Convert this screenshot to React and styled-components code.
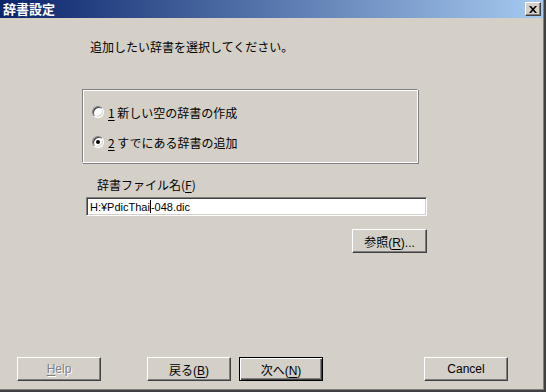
import React from "react";
import styled, { createGlobalStyle, css } from "styled-components";

const GlobalStyle = createGlobalStyle`
  html, body {
    margin: 0;
    padding: 0;
    background: #d4d0c8;
  }
  body {
    font-family: "Liberation Sans", "Noto Sans CJK JP", sans-serif;
    font-size: 12px;
    color: #000;
  }
`;

const Window = styled.div`
  width: 546px;
  height: 392px;
  box-sizing: border-box;
  display: flex;
  flex-direction: column;
  background: #d4d0c8;
  border-right: 2px solid #404040;
  border-bottom: 2px solid #404040;
  box-shadow: inset -1px -1px 0 #808080;
  overflow: hidden;
`;

const TitleBar = styled.div`
  height: 18px;
  flex-shrink: 0;
  margin-right: 1px;
  display: flex;
  align-items: center;
  justify-content: space-between;
  padding: 0 2px 0 3px;
  background: linear-gradient(to right, #0a246a, #a6caf0);
`;

const Title = styled.span`
  color: #fff;
  font-family: "Noto Sans CJK JP", sans-serif;
  font-weight: 700;
  font-size: 13px;
  line-height: 18px;
`;

const raised = css`
  background: #d4d0c8;
  box-sizing: border-box;
  border: 1px solid;
  border-color: #fff #404040 #404040 #fff;
  box-shadow: inset -1px -1px 0 #808080;
`;

const CloseBox = styled.div`
  ${raised};
  width: 16px;
  height: 14px;
  display: flex;
  align-items: center;
  justify-content: center;
`;

const Body = styled.div`
  flex: 1;
  display: flex;
  flex-direction: column;
`;

const Intro = styled.div`
  margin: 22px 0 0 90px;
  font-family: "Noto Sans CJK JP", sans-serif;
  font-size: 12px;
  line-height: 14px;
`;

const GroupBox = styled.div`
  margin: 35px 0 0 82px;
  width: 336px;
  height: 74px;
  box-sizing: border-box;
  border: 1px solid;
  border-color: #808080 #fff #fff #808080;
  box-shadow: inset 1px 1px 0 #fff;
  display: flex;
  flex-direction: column;
  gap: 14px;
  padding: 14px 0 0 9px;
  position: relative;
  &::after {
    content: "";
    position: absolute;
    inset: 0 -2px -2px 0;
    border-right: 1px solid #808080;
    border-bottom: 1px solid #808080;
    pointer-events: none;
  }
`;

const RadioRow = styled.label`
  display: flex;
  align-items: center;
  height: 16px;
  gap: 4px;
  font-family: "Noto Sans CJK JP", sans-serif;
  font-size: 12px;
`;

const RadioCircle = styled.span`
  width: 12px;
  height: 12px;
  box-sizing: border-box;
  border-radius: 50%;
  border: 1px solid;
  border-color: #808080 #fff #fff #808080;
  box-shadow: inset 1px 1px 0 #404040, inset -1px -1px 0 #d4d0c8;
  background: #fff;
  display: flex;
  align-items: center;
  justify-content: center;
  &::after {
    content: "";
    width: 4px;
    height: 4px;
    border-radius: 50%;
    background: ${(p) => (p.$checked ? "#000" : "transparent")};
  }
`;

const Key = styled.span`
  text-decoration: underline;
  text-underline-offset: 2px;
`;

const FieldLabel = styled.div`
  margin: 15px 0 0 97px;
  font-family: "Noto Sans CJK JP", sans-serif;
  font-size: 12px;
  line-height: 14px;
`;

const FileInput = styled.div`
  margin: 5px 0 0 86px;
  width: 341px;
  height: 19px;
  box-sizing: border-box;
  background: #fff;
  border: 1px solid;
  border-color: #808080 #fff #fff #808080;
  box-shadow: inset 1px 1px 0 #404040, inset -1px -1px 0 #d4d0c8;
  padding: 0 0 0 3px;
  display: flex;
  align-items: center;
  font-family: "Liberation Sans", sans-serif;
  font-size: 11px;
`;

const Caret = styled.span`
  display: inline-block;
  width: 1px;
  height: 13px;
  background: #000;
`;

const Button = styled.button`
  ${raised};
  width: ${(p) => p.$w || 84}px;
  height: 24px;
  padding: 0;
  font-family: "Liberation Sans", "Noto Sans CJK JP", sans-serif;
  font-size: 12px;
  color: #000;
  cursor: default;
  ${(p) =>
    p.$default &&
    css`
      border: 1px solid #000;
      box-shadow: inset 1px 1px 0 #fff, inset -1px -1px 0 #404040, inset -2px -2px 0 #808080;
    `}
  ${(p) =>
    p.disabled &&
    css`
      color: #808080;
      text-shadow: 1px 1px 0 #fff;
    `}
`;

const BrowseRow = styled.div`
  display: flex;
  justify-content: flex-end;
  margin: 13px 117px 0 0;
`;

const ButtonRow = styled.div`
  margin-top: auto;
  margin-bottom: 9px;
  padding: 0 36px 0 17px;
  display: flex;
  align-items: center;
`;

const Spacer = styled.div`
  width: ${(p) => p.$w}px;
  flex-shrink: 0;
`;

const Filler = styled.div`
  flex: 1;
`;

export default function App() {
  return (
    <>
      <GlobalStyle />
      <Window>
        <TitleBar>
          <Title>辞書設定</Title>
          <CloseBox>
            <svg width="8" height="7" viewBox="0 0 8 7">
              <path d="M0 0h2l2 2.2L6 0h2L5 3.5 8 7H6L4 4.8 2 7H0l3-3.5z" fill="#000" />
            </svg>
          </CloseBox>
        </TitleBar>
        <Body>
          <Intro>追加したい辞書を選択してください。</Intro>
          <GroupBox>
            <RadioRow>
              <RadioCircle />
              <span>
                <Key>1</Key> 新しい空の辞書の作成
              </span>
            </RadioRow>
            <RadioRow>
              <RadioCircle $checked />
              <span>
                <Key>2</Key> すでにある辞書の追加
              </span>
            </RadioRow>
          </GroupBox>
          <FieldLabel>
            辞書ファイル名(<Key>F</Key>)
          </FieldLabel>
          <FileInput>
            H:¥PdicThai
            <Caret />
            -048.dic
          </FileInput>
          <BrowseRow>
            <Button $w={75}>
              参照(<Key>R</Key>)...
            </Button>
          </BrowseRow>
          <ButtonRow>
            <Button disabled>
              <Key>H</Key>elp
            </Button>
            <Spacer $w={46} />
            <Button>
              戻る(<Key>B</Key>)
            </Button>
            <Spacer $w={8} />
            <Button $default>
              次へ(<Key>N</Key>)
            </Button>
            <Filler />
            <Button>Cancel</Button>
          </ButtonRow>
        </Body>
      </Window>
    </>
  );
}
